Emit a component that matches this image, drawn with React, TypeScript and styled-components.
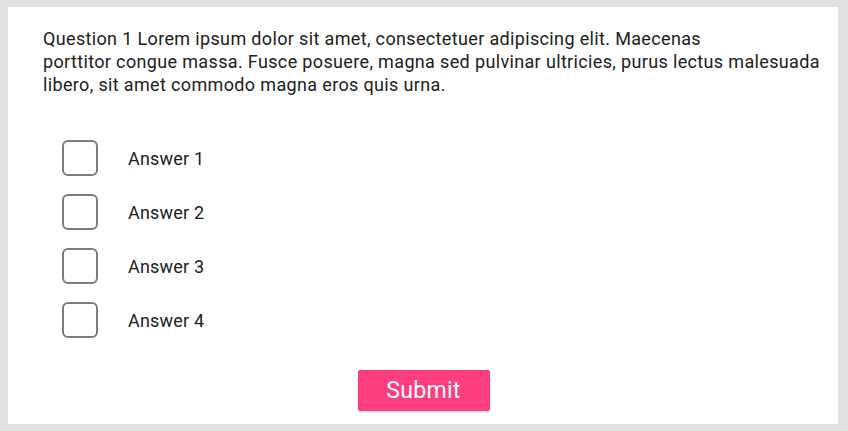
import React from "react";
import styled, { createGlobalStyle } from "styled-components";

const GlobalStyle = createGlobalStyle`
  html, body {
    margin: 0;
    padding: 0;
    background: #e3e1e3;
  }
  body {
    font-family: Roboto, "Noto Sans", Arial, sans-serif;
  }
`;

const Page = styled.div`
  width: 848px;
  height: 431px;
  box-sizing: border-box;
  padding: 7px 10px 7px 8px;
`;

const Card = styled.div`
  height: 100%;
  box-sizing: border-box;
  background: #ffffff;
  padding: 20px 14px 0 35px;
  display: flex;
  flex-direction: column;
`;

const Question = styled.p`
  margin: 0;
  font-size: 18px;
  line-height: 23px;
  letter-spacing: 0.35px;
  color: #202020;
`;

const Answers = styled.ul`
  list-style: none;
  margin: 44px 0 0;
  padding: 0 0 0 19px;
  display: flex;
  flex-direction: column;
  gap: 18px;
`;

const AnswerRow = styled.li`
  display: flex;
  align-items: center;
  height: 36px;
`;

const Box = styled.span`
  width: 32px;
  height: 32px;
  border: 2px solid #7c7c7c;
  border-radius: 6px;
  flex: none;
`;

const AnswerLabel = styled.span`
  margin-left: 30px;
  font-size: 18px;
  letter-spacing: 0.2px;
  color: #202020;
`;

const Footer = styled.div`
  display: flex;
  justify-content: center;
  margin-top: 32px;
  padding-right: 20px;
`;

const SubmitButton = styled.button`
  width: 132px;
  height: 41px;
  border: none;
  border-radius: 2px;
  background: #ff3d7f;
  color: #ffffff;
  font-family: Roboto, "Noto Sans", Arial, sans-serif;
  font-size: 23px;
  letter-spacing: 0.3px;
  box-shadow: 0 1px 2px rgba(0, 0, 0, 0.15);
  cursor: pointer;
`;

const answers = ["Answer 1", "Answer 2", "Answer 3", "Answer 4"];

export default function App() {
  return (
    <>
      <GlobalStyle />
      <Page>
        <Card>
          <Question>
            Question 1 Lorem ipsum dolor sit amet, consectetuer adipiscing elit. Maecenas
            <br />
            porttitor congue massa. Fusce posuere, magna sed pulvinar ultricies, purus lectus malesuada
            libero, sit amet commodo magna eros quis urna.
          </Question>
          <Answers>
            {answers.map((a) => (
              <AnswerRow key={a}>
                <Box />
                <AnswerLabel>{a}</AnswerLabel>
              </AnswerRow>
            ))}
          </Answers>
          <Footer>
            <SubmitButton type="button">Submit</SubmitButton>
          </Footer>
        </Card>
      </Page>
    </>
  );
}
